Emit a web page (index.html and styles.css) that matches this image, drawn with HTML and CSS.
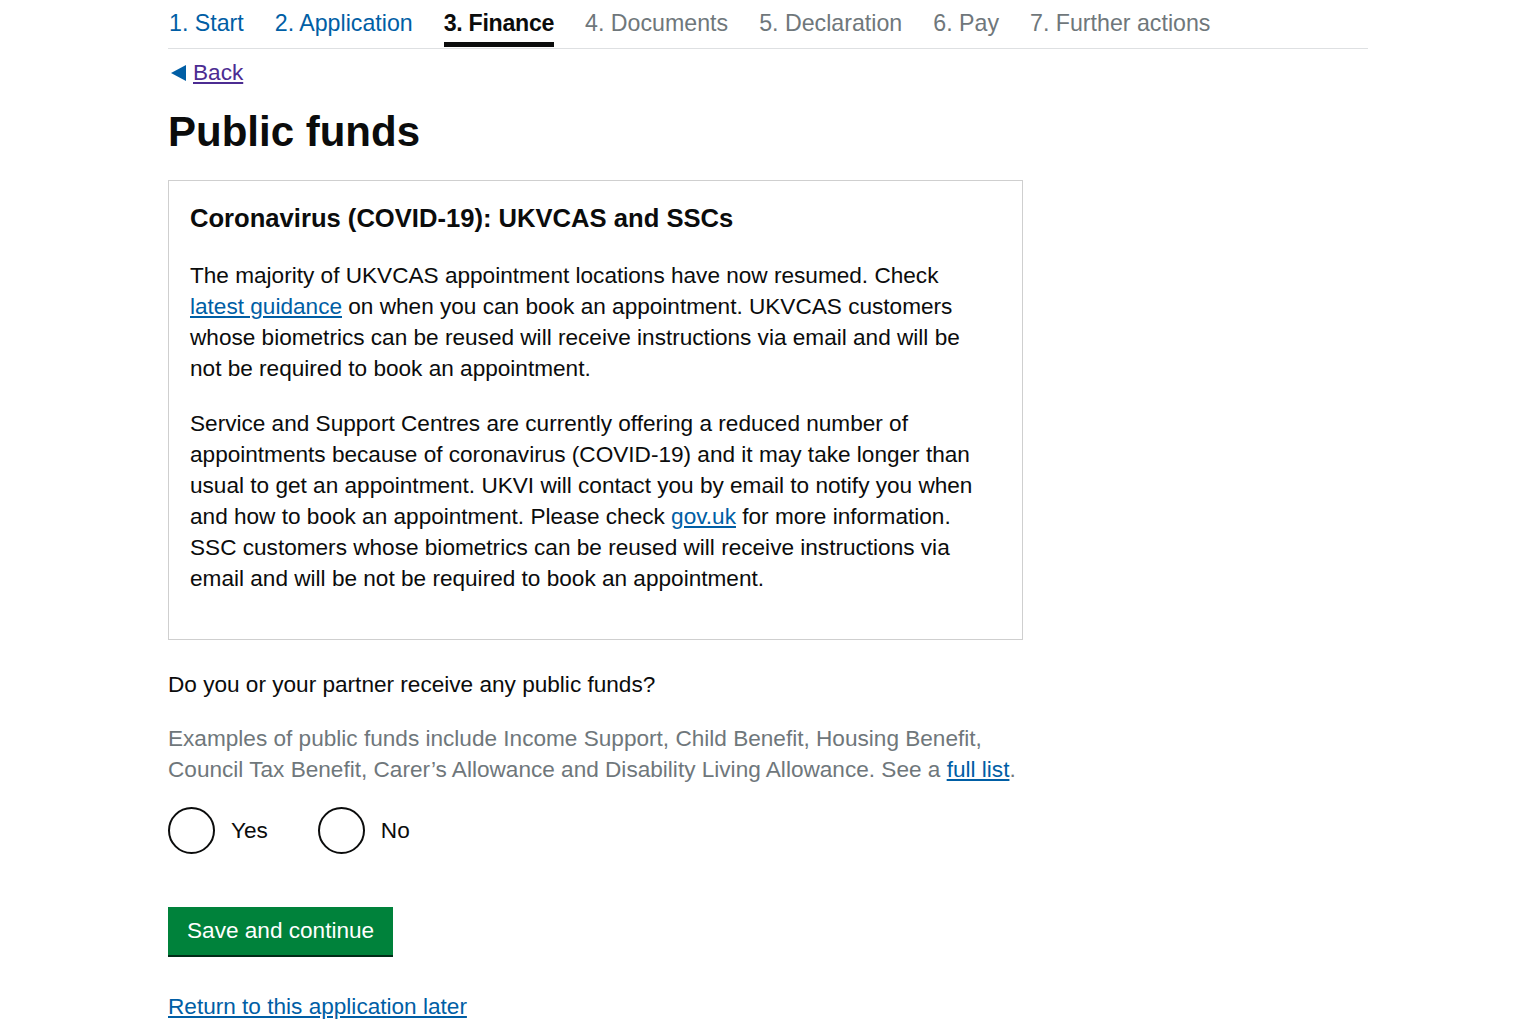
FILE: index.html
```html
<!DOCTYPE html>
<html lang="en">
  <head>
    <meta charset="UTF-8" />
    <meta name="viewport" content="width=device-width, initial-scale=1.0" />
    <title>Public funds</title>
    <link rel="stylesheet" href="styles.css">
  </head>
  <body>
    <div class="page">
      <nav class="steps">
        <a class="step done" href="#">1. Start</a>
        <a class="step done" href="#">2. Application</a>
        <span class="step current">3. Finance</span>
        <span class="step">4. Documents</span>
        <span class="step">5. Declaration</span>
        <span class="step">6. Pay</span>
        <span class="step">7. Further actions</span>
      </nav>

      <a class="back" href="#">Back</a>

      <h1>Public funds</h1>

      <div class="panel">
        <h2>Coronavirus (COVID-19): UKVCAS and SSCs</h2>
        <p>
          The majority of UKVCAS appointment locations have now resumed. Check
          <a href="#">latest guidance</a> on when you can book an appointment. UKVCAS customers
          whose biometrics can be reused will receive instructions via email and will be
          not be required to book an appointment.
        </p>
        <p>
          Service and Support Centres are currently offering a reduced number of
          appointments because of coronavirus (COVID-19) and it may take longer than
          usual to get an appointment. UKVI will contact you by email to notify you when
          and how to book an appointment. Please check <a href="#">gov.uk</a> for more information.
          SSC customers whose biometrics can be reused will receive instructions via
          email and will be not be required to book an appointment.
        </p>
      </div>

      <form class="question">
        <p class="label">Do you or your partner receive any public funds?</p>
        <p class="hint">
          Examples of public funds include Income Support, Child Benefit, Housing Benefit,
          Council Tax Benefit, Carer’s Allowance and Disability Living Allowance. See a
          <a href="#">full list</a>.
        </p>
        <div class="radios">
          <label class="radio"><input type="radio" name="funds" /><span>Yes</span></label>
          <label class="radio"><input type="radio" name="funds" /><span>No</span></label>
        </div>
        <button type="submit">Save and continue</button>
      </form>

      <a class="later" href="#">Return to this application later</a>
    </div>
  </body>
</html>
```

FILE: styles.css
```css
body {
  margin: 0;
  font-family: "Liberation Sans", Arial, sans-serif;
  color: #0b0c0c;
  background: #fff;
}

a {
  color: #005ea5;
}

.page {
  width: 1200px;
  margin-left: 168px;
}

/* step navigation */
.steps {
  display: flex;
  gap: 31px;
  padding-left: 1px;
  border-bottom: 1px solid #dee0e2;
  font-size: 23.2px;
  line-height: 27px;
}

.step {
  display: block;
  padding: 10px 0 5px;
  border-bottom: 5px solid transparent;
  margin-bottom: 1px;
  color: #6f777b;
  text-decoration: none;
}

.step.done {
  color: #005ea5;
}

.step.current {
  color: #0b0c0c;
  font-weight: bold;
  letter-spacing: -0.3px;
  border-bottom-color: #0b0c0c;
}

.back {
  display: inline-flex;
  align-items: center;
  margin-top: 8px;
  font-size: 22.6px;
  line-height: 31px;
  color: #4c2c92;
}

.back::before {
  content: "";
  display: inline-block;
  width: 0;
  height: 0;
  border-style: solid;
  border-width: 8px 15px 8px 0;
  border-color: transparent #005ea5 transparent transparent;
  margin: 0 7px 0 3px;
}

h1 {
  margin: 21px 0 25px;
  font-size: 42px;
  line-height: 46px;
}

/* covid notice */
.panel {
  width: 806px;
  padding: 20px 26px 21px 21px;
  border: 1px solid #cfcfcf;
}

.panel h2 {
  margin: 0 0 25px;
  font-size: 25.6px;
  line-height: 34px;
}

.panel p {
  margin: 0 0 24px;
  font-size: 22.6px;
  line-height: 31px;
}

/* question */
.question {
  margin-top: 29px;
}

.question p {
  margin: 0;
  font-size: 22.6px;
  line-height: 31px;
}

.question .label {
  margin-bottom: 23px;
}

.question .hint {
  width: 860px;
  color: #6f777b;
}

.radios {
  display: flex;
  gap: 50px;
  margin-top: 22px;
}

.radio {
  display: flex;
  align-items: center;
  gap: 16px;
  font-size: 22.6px;
}

.radio input {
  appearance: none;
  width: 47px;
  height: 47px;
  margin: 0;
  border: 2px solid #0b0c0c;
  border-radius: 50%;
  background: #fff;
}

button {
  display: block;
  margin-top: 53px;
  padding: 9px 19px;
  border: 0;
  box-shadow: 0 2px 0 #002d18;
  background: #00823b;
  color: #fff;
  font-family: inherit;
  font-size: 22.6px;
  line-height: 30px;
}

.later {
  display: inline-block;
  margin-top: 36px;
  font-size: 22.6px;
  line-height: 31px;
}
```
